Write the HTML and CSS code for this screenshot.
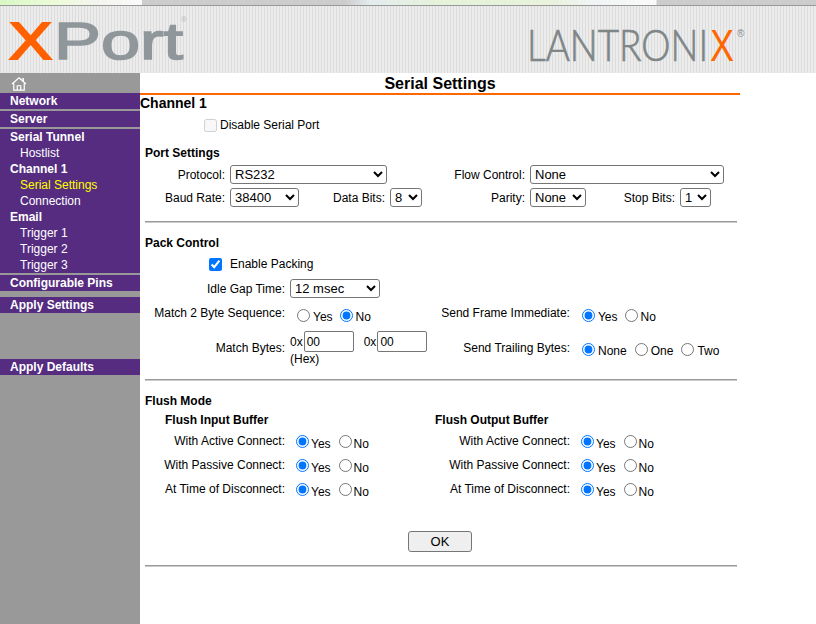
FILE: index.html
```html
<!DOCTYPE html>
<html lang="en">
<head>
<meta charset="UTF-8">
<title>Serial Settings</title>
<link rel="stylesheet" href="styles.css">
</head>
<body>

<div class="strip"></div>

<header class="banner">
  <svg class="logo-xport" width="200" height="66" viewBox="0 0 200 66">
    <text class="x" x="9" y="53" textLength="43" lengthAdjust="spacingAndGlyphs">X</text>
    <text class="port" x="54" y="53" textLength="129" lengthAdjust="spacingAndGlyphs">Port</text>
    <text class="tm" x="181" y="16">®</text>
  </svg>
  <svg class="logo-lantronix" width="226" height="66" viewBox="0 0 226 66">
    <text class="lan" transform="translate(6 55) scale(1 1.22)" textLength="181" lengthAdjust="spacingAndGlyphs">LANTRONI</text>
    <text class="nix" transform="translate(189 55) scale(1 1.22)" textLength="24" lengthAdjust="spacingAndGlyphs">X</text>
    <text class="reg" x="216" y="31">®</text>
  </svg>
</header>

<div class="layout">

<nav class="sidebar">
  <div class="home">
    <svg width="16" height="14" viewBox="0 0 18 16" fill="none" stroke="#fff" stroke-width="1.4">
      <path d="M1 8 L9 1 L17 8 M14 5 V2 H12 M3 7 V15 H15 V7 M7 15 V10 H11 V15"/>
    </svg>
  </div>
  <a class="item">Network</a>
  <a class="item">Server</a>
  <div class="group">
    <a class="item">Serial Tunnel</a>
    <a class="sub">Hostlist</a>
    <a class="item">Channel 1</a>
    <a class="sub current">Serial Settings</a>
    <a class="sub">Connection</a>
    <a class="item">Email</a>
    <a class="sub">Trigger 1</a>
    <a class="sub">Trigger 2</a>
    <a class="sub">Trigger 3</a>
  </div>
  <a class="item">Configurable Pins</a>
  <a class="item apply">Apply Settings</a>
  <a class="item defaults">Apply Defaults</a>
</nav>

<main class="content">
  <h1>Serial Settings</h1>
  <h2>Channel 1</h2>

  <div class="row disable">
    <input type="checkbox" disabled>
    <span>Disable Serial Port</span>
  </div>

  <h3 class="port-head">Port Settings</h3>
  <div class="row port-row first">
    <span class="lbl w90">Protocol:</span>
    <select class="w157"><option>RS232</option></select>
    <span class="lbl w143">Flow Control:</span>
    <select class="w194"><option>None</option></select>
  </div>
  <div class="row port-row">
    <span class="lbl w90">Baud Rate:</span>
    <select class="w69"><option>38400</option></select>
    <span class="lbl w91">Data Bits:</span>
    <select class="w32"><option>8</option></select>
    <span class="lbl w108">Parity:</span>
    <select class="w56"><option>None</option></select>
    <span class="lbl w94">Stop Bits:</span>
    <select class="w31"><option>1</option></select>
  </div>

  <hr class="rule-port">

  <h3 class="pack-head">Pack Control</h3>
  <div class="row enable">
    <input type="checkbox" checked>
    <span>Enable Packing</span>
  </div>
  <div class="row idle">
    <span class="lbl w150">Idle Gap Time:</span>
    <select class="w90"><option>12 msec</option></select>
  </div>
  <div class="row match">
    <span class="lbl w150 up">Match 2 Byte Sequence:</span>
    <label class="opt ml7 mr7"><input type="radio" name="m2"><span>Yes</span></label>
    <label class="opt"><input type="radio" name="m2" checked><span>No</span></label>
    <span class="lbl up w204">Send Frame Immediate:</span>
    <label class="opt ml7 mr7"><input type="radio" name="sf" checked><span>Yes</span></label>
    <label class="opt"><input type="radio" name="sf"><span>No</span></label>
  </div>
  <div class="row bytes">
    <span class="lbl w150 bytes-lbl">Match Bytes:</span>
    <div class="hex">
      <div class="hex-inputs">
        <span>0x</span><input type="text" value="00">
        <span class="second">0x</span><input type="text" value="00">
      </div>
      <span>(Hex)</span>
    </div>
    <span class="lbl w145 bytes-lbl">Send Trailing Bytes:</span>
    <div class="trailing">
      <label class="opt ml7 mr8"><input type="radio" name="st" checked><span>None</span></label>
      <label class="opt mr8"><input type="radio" name="st"><span>One</span></label>
      <label class="opt"><input type="radio" name="st"><span>Two</span></label>
    </div>
  </div>

  <hr class="rule-pack">

  <h3 class="flush-head">Flush Mode</h3>
  <div class="flush">
    <div class="col col-in">
      <h3 class="buffer">Flush Input Buffer</h3>
      <div class="row flush-row">
        <span class="lbl">With Active Connect:</span>
        <label class="opt mr8"><input type="radio" name="ia" checked><span>Yes</span></label>
        <label class="opt"><input type="radio" name="ia"><span>No</span></label>
      </div>
      <div class="row flush-row">
        <span class="lbl">With Passive Connect:</span>
        <label class="opt mr8"><input type="radio" name="ip" checked><span>Yes</span></label>
        <label class="opt"><input type="radio" name="ip"><span>No</span></label>
      </div>
      <div class="row flush-row">
        <span class="lbl">At Time of Disconnect:</span>
        <label class="opt mr8"><input type="radio" name="id" checked><span>Yes</span></label>
        <label class="opt"><input type="radio" name="id"><span>No</span></label>
      </div>
    </div>
    <div class="col col-out">
      <h3 class="buffer">Flush Output Buffer</h3>
      <div class="row flush-row">
        <span class="lbl">With Active Connect:</span>
        <label class="opt mr8"><input type="radio" name="oa" checked><span>Yes</span></label>
        <label class="opt"><input type="radio" name="oa"><span>No</span></label>
      </div>
      <div class="row flush-row">
        <span class="lbl">With Passive Connect:</span>
        <label class="opt mr8"><input type="radio" name="op" checked><span>Yes</span></label>
        <label class="opt"><input type="radio" name="op"><span>No</span></label>
      </div>
      <div class="row flush-row">
        <span class="lbl">At Time of Disconnect:</span>
        <label class="opt mr8"><input type="radio" name="od" checked><span>Yes</span></label>
        <label class="opt"><input type="radio" name="od"><span>No</span></label>
      </div>
    </div>
  </div>

  <div class="actions"><button type="button">OK</button></div>
  <hr class="rule-end">
</main>

</div>

</body>
</html>
```

FILE: styles.css
```css
* {
  box-sizing: border-box;
}

html, body {
  height: 624px;
  overflow: hidden;
}

body {
  margin: 0;
  font-family: "Liberation Sans", Arial, sans-serif;
  font-size: 12px;
  color: #000;
  background-color: #fff;
}

.strip {
  height: 6px;
  border-bottom: 1px solid #999;
  background:
    linear-gradient(to right, #d8f8c4 0, #eefbdc 60px, #f4f4f0 100px, #fafafa 142px, #ccc 142px, #ccc 345px, #e4ecee 370px, #e6f2da 440px, #e8f2dc 550px, #f0f4f4 590px, #fafafa 656px, #ccc 657px);
}

.banner {
  display: flex;
  height: 67px;
  background: repeating-linear-gradient(to right, #dcdcdc 0, #dcdcdc 1px, #ececec 1px, #ececec 3px);
}

.logo-lantronix {
  margin-left: 321px;
}

.logo-xport text,
.logo-lantronix text {
  font-family: "Liberation Sans", Arial, sans-serif;
}

.x {
  font-size: 52px;
  fill: #ff6000;
  stroke: #ff6000;
  stroke-width: 2px;
}

.port {
  font-size: 52px;
  fill: #8f979b;
  stroke: #8f979b;
  stroke-width: 1.5px;
}

.tm {
  font-size: 8px;
  fill: #b5b9bb;
}

.logo-lantronix .lan {
  font-family: "Lato", sans-serif;
  font-size: 36px;
  font-weight: 300;
  fill: #7f8688;
  stroke: #7f8688;
  stroke-width: 0.6px;
}

.nix {
  font-size: 36px;
  fill: #ff6600;
}

.reg {
  font-size: 10px;
  fill: #8a9092;
}

.layout {
  display: flex;
}

/* left menu */
.sidebar {
  width: 140px;
  height: 551px;
  flex-shrink: 0;
  background-color: #999;
  color: #fff;
}

.home {
  height: 20px;
  padding: 4px 0 0 11px;
}

.home svg {
  display: block;
}

.item, .sub {
  display: block;
  height: 16px;
  line-height: 17px;
  white-space: nowrap;
  color: #fff;
}

.item {
  padding-left: 10px;
  font-weight: bold;
  background-color: #552c7f;
  margin-bottom: 2px;
}

.sub {
  padding-left: 20px;
}

.group {
  background-color: #552c7f;
  margin-bottom: 2px;
}

.group .item {
  margin-bottom: 0;
}

.sub.current {
  color: #ff0;
}

.apply {
  margin-top: 6px;
}

.defaults {
  margin-top: 46px;
}

/* form */
.content {
  width: 600px;
}

h1 {
  margin: 0;
  height: 22px;
  line-height: 21px;
  font-size: 16px;
  text-align: center;
  border-bottom: 2px solid #ff6600;
}

h2 {
  margin: 0;
  height: 16px;
  line-height: 16px;
  font-size: 14px;
}

h3 {
  margin: 0 0 0 5px;
  height: 16px;
  line-height: 16px;
  font-size: 12px;
}

hr {
  height: 2px;
  margin: 0 0 0 5px;
  width: 592px;
  border: 0;
  border-top: 1px solid #999;
  border-bottom: 1px solid #ccc;
}

.row {
  display: flex;
  align-items: center;
}

.row input[type="checkbox"] {
  margin: 0;
  width: 13px;
  height: 13px;
}

.lbl {
  flex-shrink: 0;
  text-align: right;
  padding-right: 5px;
  white-space: nowrap;
}

.up {
  padding-bottom: 2px;
}

.w90 { width: 90px; }
.w91 { width: 91px; }
.w94 { width: 94px; }
.w108 { width: 108px; }
.w143 { width: 143px; }
.w145 { width: 145px; }
.w150 { width: 150px; }
.w204 { width: 204px; }

select {
  height: 19px;
  padding: 0;
  font-family: "Liberation Sans", Arial, sans-serif;
  font-size: 13px;
  color: #000;
  background-color: #fff;
  border: 1px solid #767676;
  border-radius: 3px;
}

select.w157 { width: 157px; }
select.w194 { width: 194px; }
select.w69 { width: 69px; }
select.w32 { width: 32px; }
select.w56 { width: 56px; }
select.w31 { width: 31px; }
select.w90 { width: 90px; }

.disable {
  margin: 6px 0 0 64px;
  height: 16px;
  gap: 3px;
}

.port-head {
  margin-top: 12px;
}

.port-row {
  margin-top: 4px;
  height: 19px;
}

.rule-port {
  margin-top: 14px;
}

.pack-head {
  margin-top: 12px;
}

.enable {
  margin: 5px 0 0 69px;
  height: 16px;
  gap: 8px;
}

.idle {
  margin-top: 7px;
  height: 19px;
}

.match {
  margin-top: 7px;
  height: 18px;
}

/* radio plus its caption, caption sits a bit lower */
.opt {
  display: flex;
  align-items: center;
  flex-shrink: 0;
  padding-top: 3px;
}

.opt input {
  margin: 0 3px 0 0;
  width: 13px;
  height: 13px;
}

.opt span {
  padding-top: 3px;
}

.ml7 {
  margin-left: 7px;
}

.mr7 {
  margin-right: 7px;
}

.mr8 {
  margin-right: 8px;
}

.bytes {
  margin-top: 8px;
  height: 35px;
  align-items: flex-start;
}

.bytes-lbl {
  padding-top: 10px;
}

.hex {
  width: 140px;
  flex-shrink: 0;
}

.hex-inputs {
  display: flex;
  align-items: center;
  height: 21px;
}

.hex-inputs input {
  width: 50px;
  height: 21px;
  margin-left: 1px;
  padding: 0 2px;
  font-family: "Liberation Sans", Arial, sans-serif;
  font-size: 12px;
  border: 1px solid #767676;
  border-radius: 2px;
}

.hex-inputs .second {
  margin-left: 10px;
}

.trailing {
  display: flex;
  padding-top: 7px;
}

.rule-pack {
  margin-top: 13px;
}

.flush-head {
  margin-top: 12px;
}

.flush {
  display: flex;
  margin-top: 3px;
}

.col-in {
  width: 290px;
}

.col-in .buffer {
  margin-left: 25px;
}

.col-out {
  width: 310px;
}

.col-out .buffer {
  margin-left: 5px;
}

h3.buffer {
  height: 17px;
}

.flush-row {
  height: 24px;
}

.col-in .flush-row .lbl {
  width: 156px;
  padding-right: 11px;
}

.col-out .flush-row .lbl {
  width: 151px;
  padding-right: 11px;
}

.flush-row .opt {
  padding-top: 0;
}

.flush-row .opt input {
  margin-right: 2px;
}

.flush-row .opt span {
  padding-top: 6px;
}

.actions {
  margin-top: 30px;
  padding-left: 268px;
}

button {
  display: block;
  width: 64px;
  height: 21px;
  padding: 0;
  font-family: "Liberation Sans", Arial, sans-serif;
  font-size: 13px;
  color: #000;
  background-color: #efefef;
  border: 1px solid #767676;
  border-radius: 3px;
}

.rule-end {
  margin-top: 13px;
}
```
